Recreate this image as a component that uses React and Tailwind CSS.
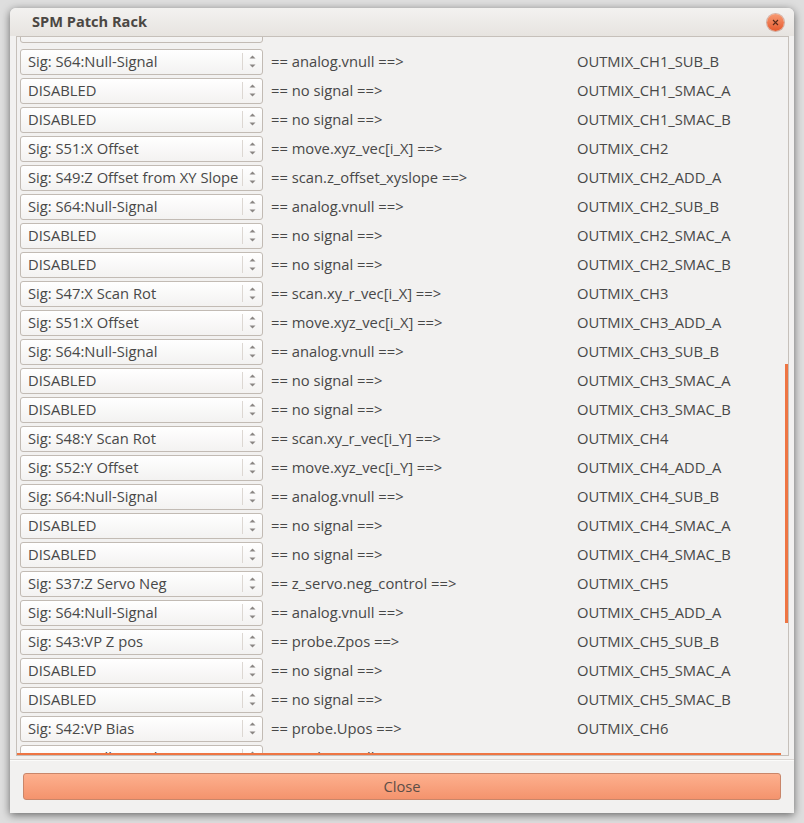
import React from "react";

const rows = [
  ["Sig: S64:Null-Signal", "== analog.vnull ==>", "OUTMIX_CH1_SUB_B"],
  ["DISABLED", "== no signal ==>", "OUTMIX_CH1_SMAC_A"],
  ["DISABLED", "== no signal ==>", "OUTMIX_CH1_SMAC_B"],
  ["Sig: S51:X Offset", "== move.xyz_vec[i_X] ==>", "OUTMIX_CH2"],
  ["Sig: S49:Z Offset from XY Slope", "== scan.z_offset_xyslope ==>", "OUTMIX_CH2_ADD_A"],
  ["Sig: S64:Null-Signal", "== analog.vnull ==>", "OUTMIX_CH2_SUB_B"],
  ["DISABLED", "== no signal ==>", "OUTMIX_CH2_SMAC_A"],
  ["DISABLED", "== no signal ==>", "OUTMIX_CH2_SMAC_B"],
  ["Sig: S47:X Scan Rot", "== scan.xy_r_vec[i_X] ==>", "OUTMIX_CH3"],
  ["Sig: S51:X Offset", "== move.xyz_vec[i_X] ==>", "OUTMIX_CH3_ADD_A"],
  ["Sig: S64:Null-Signal", "== analog.vnull ==>", "OUTMIX_CH3_SUB_B"],
  ["DISABLED", "== no signal ==>", "OUTMIX_CH3_SMAC_A"],
  ["DISABLED", "== no signal ==>", "OUTMIX_CH3_SMAC_B"],
  ["Sig: S48:Y Scan Rot", "== scan.xy_r_vec[i_Y] ==>", "OUTMIX_CH4"],
  ["Sig: S52:Y Offset", "== move.xyz_vec[i_Y] ==>", "OUTMIX_CH4_ADD_A"],
  ["Sig: S64:Null-Signal", "== analog.vnull ==>", "OUTMIX_CH4_SUB_B"],
  ["DISABLED", "== no signal ==>", "OUTMIX_CH4_SMAC_A"],
  ["DISABLED", "== no signal ==>", "OUTMIX_CH4_SMAC_B"],
  ["Sig: S37:Z Servo Neg", "== z_servo.neg_control ==>", "OUTMIX_CH5"],
  ["Sig: S64:Null-Signal", "== analog.vnull ==>", "OUTMIX_CH5_ADD_A"],
  ["Sig: S43:VP Z pos", "== probe.Zpos ==>", "OUTMIX_CH5_SUB_B"],
  ["DISABLED", "== no signal ==>", "OUTMIX_CH5_SMAC_A"],
  ["DISABLED", "== no signal ==>", "OUTMIX_CH5_SMAC_B"],
  ["Sig: S42:VP Bias", "== probe.Upos ==>", "OUTMIX_CH6"],
  ["Sig: S64:Null-Signal", "== analog.vnull ==>", "OUTMIX_CH6_ADD_A"],
];

function Combo({ label }) {
  return (
    <div className="flex h-[26px] w-[243px] shrink-0 items-center rounded-[3px] border border-[#c2bbb4] bg-gradient-to-b from-[#ffffff] to-[#f3f2f1]">
      <div className="mb-[2px] flex-1 overflow-hidden whitespace-nowrap pl-[7px] leading-[20px]">{label}</div>
      <div className="h-[17px] w-px bg-[#dcd7d2]" />
      <div className="flex w-[19px] flex-col items-center justify-center gap-[5px]">
        <svg width="7" height="4" viewBox="0 0 7 4"><path d="M0.5 3.5 L3.5 0.5 L6.5 3.5 Z" fill="#8a8683" /></svg>
        <svg width="7" height="4" viewBox="0 0 7 4"><path d="M0.5 0.5 L3.5 3.5 L6.5 0.5 Z" fill="#8a8683" /></svg>
      </div>
    </div>
  );
}

export default function App() {
  return (
    <div
      className="h-[823px] w-[804px] overflow-hidden bg-[#dedede] pl-[10px] pt-[8px] text-[14.75px] text-[#484848]"
      style={{ fontFamily: '"Open Sans", "DejaVu Sans", sans-serif' }}
    >
      <div className="flex h-[805px] w-[784px] flex-col rounded-t-[6px] bg-[#f2f1f0] shadow-[0_2px_9px_rgba(0,0,0,0.55)]">
        {/* Title bar */}
        <div className="flex h-[28px] shrink-0 items-center justify-between rounded-t-[6px] bg-gradient-to-b from-[#f3f2f0] to-[#e7e4e0] pl-[22px] pr-[10px]">
          <div className="text-[14.6px] font-bold text-[#4b4743]">SPM Patch Rack</div>
          <div className="flex h-[17px] w-[17px] items-center justify-center rounded-full bg-gradient-to-b from-[#f79a72] to-[#e5582b] shadow-[0_0_0_1px_rgba(160,60,30,0.35)]">
            <svg width="7" height="7" viewBox="0 0 7 7"><path d="M1 1 L6 6 M6 1 L1 6" stroke="#5a2a1a" strokeWidth="1.1" /></svg>
          </div>
        </div>
        {/* Frame */}
        <div className="pl-[6px] pr-[5px]">
          <div className="relative h-[720px] overflow-hidden border border-[#c6c0ba]">
            <div className="pl-[3px]">
              <div className="h-[10px] overflow-hidden">
                <div className="mt-[-20px]">
                  <div className="h-[26px] w-[243px] rounded-[3px] border border-[#c2bbb4] bg-gradient-to-b from-[#ffffff] to-[#f3f2f1]" />
                </div>
              </div>
              {rows.map((r, i) => (
                <div key={i} className="flex h-[29px] items-center">
                  <Combo label={r[0]} />
                  <div className="mb-[2px] ml-[8px] w-[306px] shrink-0 whitespace-nowrap leading-[20px]">{r[1]}</div>
                  <div className="mb-[2px] whitespace-nowrap leading-[20px]">{r[2]}</div>
                </div>
              ))}
            </div>
            <div className="absolute right-0 top-[327px] h-[259px] w-[3px] bg-[#ee7543]" />
            <div className="absolute bottom-0 left-0 h-[2px] w-[764px] bg-[#ee7543]" />
          </div>
        </div>
        <div className="mt-[3px] h-px bg-[#dbd7d3]" />
        <div className="h-px bg-[#fbfbfa]" />
        {/* Button */}
        <div className="px-[13px] pt-[12px]">
          <div className="flex h-[27px] items-center justify-center rounded-[3px] border border-[#c9866a] bg-gradient-to-b from-[#fdb08e] to-[#f4936d] text-[#5d4e47]">
            Close
          </div>
        </div>
      </div>
    </div>
  );
}
